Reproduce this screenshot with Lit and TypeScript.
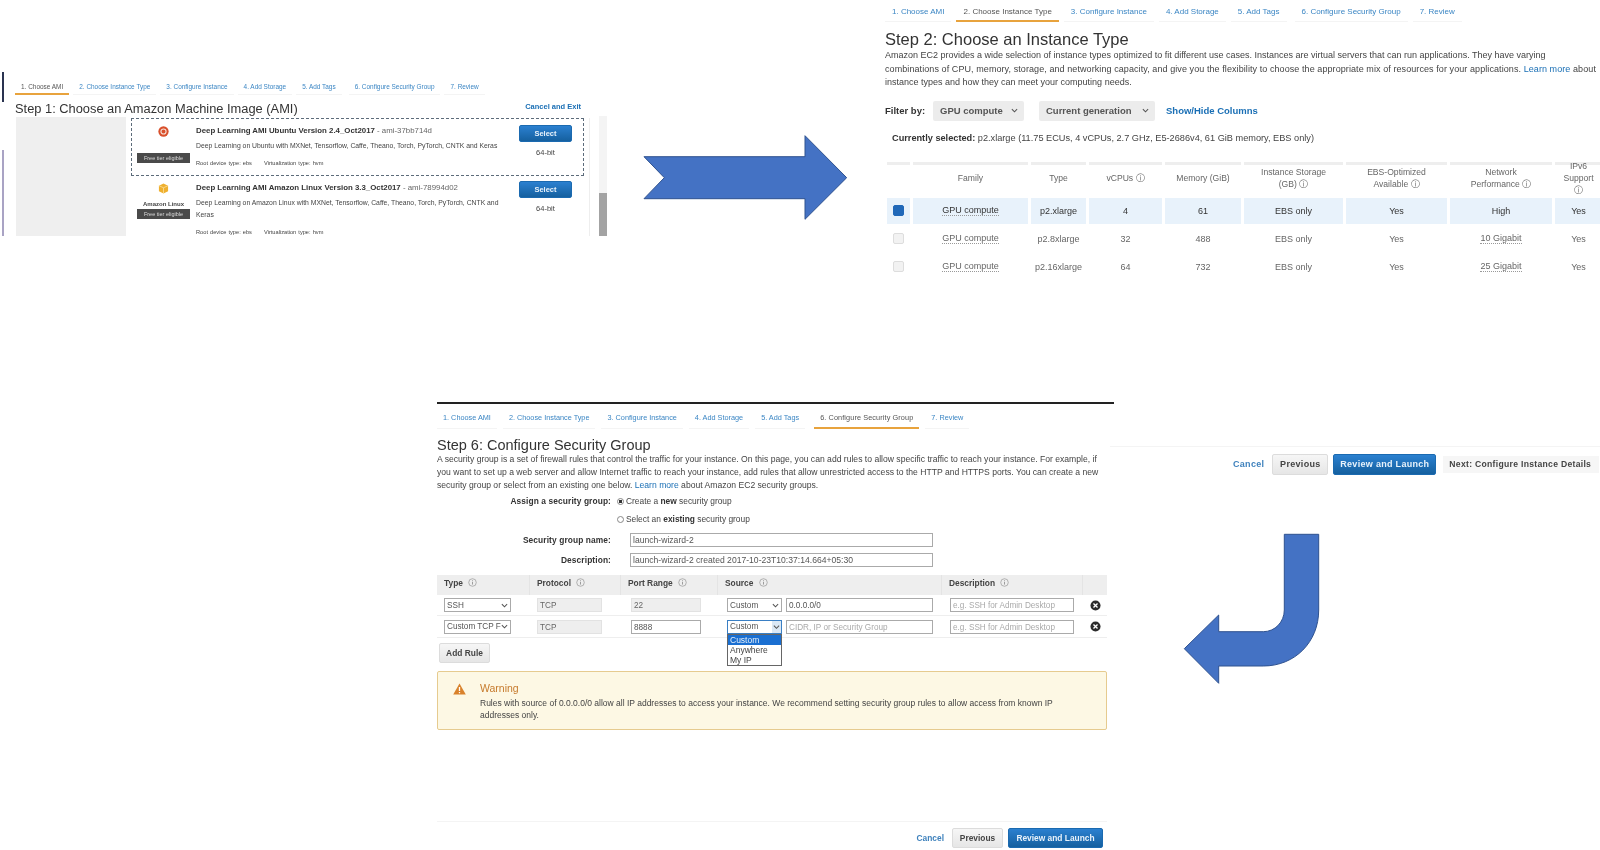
import { LitElement, html, css, svg } from "lit";
import { customElement } from "lit/decorators.js";

// --- Data ---

const STEPS = [
  "1. Choose AMI",
  "2. Choose Instance Type",
  "3. Configure Instance",
  "4. Add Storage",
  "5. Add Tags",
  "6. Configure Security Group",
  "7. Review",
];

const INSTANCE_HEAD = [
  "",
  "Family",
  "Type",
  "vCPUs ⓘ",
  "Memory (GiB)",
  "Instance Storage\n(GB) ⓘ",
  "EBS-Optimized\nAvailable ⓘ",
  "Network\nPerformance ⓘ",
  "IPv6\nSupport\nⓘ",
];

const INSTANCES = [
  { type: "p2.xlarge", cpu: "4", mem: "61", net: "High", on: true },
  { type: "p2.8xlarge", cpu: "32", mem: "488", net: "10 Gigabit", on: false },
  { type: "p2.16xlarge", cpu: "64", mem: "732", net: "25 Gigabit", on: false },
];

// --- Small pieces ---

const chevron = html`<svg class="chev" viewBox="0 0 8 5"><path d="M1 1l3 3 3-3" fill="none" stroke="#555" stroke-width="1.2" /></svg>`;

const info = html`<svg class="info" viewBox="0 0 10 10">
  <circle cx="5" cy="5" r="4.2" fill="none" stroke="#999" stroke-width=".8" />
  <path d="M5 4.3v3M5 2.6v.9" stroke="#888" stroke-width=".9" />
</svg>`;

const removeIcon = html`<svg class="remove" viewBox="0 0 12 12">
  <circle cx="6" cy="6" r="5.5" fill="#2b2b2b" />
  <path d="M3.8 3.8l4.4 4.4M8.2 3.8l-4.4 4.4" stroke="#fff" stroke-width="1.5" />
</svg>`;

const ubuntuIcon = html`<svg class="logo" viewBox="0 0 12 12">
  <circle cx="6" cy="6" r="5.6" fill="#d9502c" />
  <circle cx="6" cy="6" r="2.8" fill="none" stroke="#f6e3da" stroke-width="1.2" />
</svg>`;

const amazonIcon = html`<svg class="logo" viewBox="0 0 12 12">
  <path d="M6 .5l5 2.4v6.2l-5 2.4-5-2.4V2.9z" fill="#efb02f" />
  <path d="M6 5.2v6.3M1 2.9l5 2.3 5-2.3" fill="none" stroke="#fbe3a8" stroke-width=".8" />
</svg>`;

const warnIcon = html`<svg class="warn-icon" viewBox="0 0 12 11">
  <path d="M6 .4l5.8 10.2H.2z" fill="#d9822b" />
  <path d="M6 3.6v3.8M6 8.2v1.2" stroke="#fff" stroke-width="1.2" />
</svg>`;

const tabs = (active: number) => html`<div class="tabs">
  ${STEPS.map((s, i) => html`<span class="tab ${i === active ? "on" : ""}">${s}</span>`)}
</div>`;

const sel = (label: string, cls = "") => html`<div class="sel ${cls}"><span>${label}</span>${chevron}</div>`;

@customElement("app-root")
export class AppRoot extends LitElement {
  static styles = css`
    :host {
      display: block;
      position: relative;
      width: 1600px;
      height: 850px;
      overflow: hidden;
      background: #fff;
      font-family: "Liberation Sans", Arial, sans-serif;
      color: #444;
    }

    /* each screenshot sits on the slide like a window */
    .shot {
      position: absolute;
      overflow: hidden;
      background: #fff;
      filter: blur(0.45px);
      box-sizing: border-box;
    }
    .arrows {
      position: absolute;
      left: 0;
      top: 0;
    }

    a,
    .link {
      color: #1a6fb5;
    }
    b {
      color: #333;
    }

    .tabs {
      display: flex;
    }
    .tab {
      color: #3b86c4;
      white-space: nowrap;
      border-bottom: 1px solid #f4f4f4;
      box-sizing: border-box;
    }
    .tab.on {
      color: #555;
      border-bottom: 2px solid #e8a33d;
    }
    .tab:nth-child(6) {
      margin-left: 3px;
    }

    h1 {
      margin: 0;
      font-weight: 400;
      color: #333;
      white-space: nowrap;
    }
    p {
      margin: 0;
      white-space: nowrap;
    }

    .chev {
      width: 7px;
      height: 5px;
      flex: none;
    }
    .info {
      width: 9px;
      height: 9px;
      margin-left: 3px;
      vertical-align: -1px;
    }

    .btn {
      display: flex;
      align-items: center;
      justify-content: center;
      box-sizing: border-box;
      border-radius: 2px;
      font-weight: 700;
      white-space: nowrap;
    }
    .btn.blue {
      color: #e8f2fb;
      background: linear-gradient(#2b80d0, #15609f);
      border: 1px solid #1b6ab0;
    }
    .btn.grey {
      color: #444;
      background: linear-gradient(#f6f6f6, #e6e6e6);
      border: 1px solid #dcdcdc;
    }

    /* step 1 */
    .s1 {
      left: 0;
      top: 70px;
      width: 620px;
      height: 166px;
      padding: 8px 0 0 15px;
    }
    .edge {
      position: absolute;
      left: 2px;
      width: 2px;
    }
    .edge.dark {
      top: 2px;
      height: 30px;
      background: #2a3350;
    }
    .edge.mauve {
      top: 80px;
      height: 86px;
      background: #a9a3c4;
    }
    .s1 .tab {
      font-size: 6.45px;
      height: 17px;
      padding: 5px 6px 0;
      margin-right: 4px;
    }
    .s1 .head {
      display: flex;
      justify-content: space-between;
      width: 566px;
      margin-top: 6px;
      height: 15px;
    }
    .s1 h1 {
      font-size: 12.85px;
      line-height: 16px;
    }
    .s1 .exit {
      font-size: 7.5px;
      font-weight: 700;
      line-height: 9px;
      margin-top: 1px;
    }
    .s1 .body {
      display: flex;
      margin-left: 1px;
      height: 120px;
    }
    .s1 .side {
      width: 110px;
      margin-top: 1px;
      background: #efefef;
    }
    .s1 .list {
      width: 458px;
      margin: 2px 0 0 5px;
      border-right: 1px solid #eee;
      flex: none;
    }
    .ami {
      display: grid;
      grid-template-columns: 53px 317px 53px;
      column-gap: 6px;
      width: 453px;
      padding-left: 6px;
      box-sizing: border-box;
    }
    .ami.picked {
      height: 58px;
      border: 1px dashed #5c6b7a;
      padding-left: 5px;
    }
    .ami .mark {
      display: flex;
      flex-direction: column;
      align-items: center;
      padding-top: 7px;
      font-size: 6px;
      font-weight: 700;
    }
    .logo {
      width: 11px;
      height: 11px;
      flex: none;
    }
    .badge {
      width: 100%;
      height: 10px;
      background: #4a4a4a;
      color: #ddd;
      font-size: 5.5px;
      line-height: 10px;
      font-weight: 400;
      text-align: center;
    }
    .picked .badge {
      margin-top: 16px;
    }
    .distro {
      margin-top: 5px;
      height: 10px;
      line-height: 10px;
      white-space: nowrap;
      color: #444;
    }
    .ami .txt {
      padding-top: 7px;
      font-size: 6.82px;
      line-height: 12px;
      white-space: nowrap;
    }
    .ami .name {
      font-size: 7.85px;
      line-height: 10px;
      color: #666;
    }
    .ami .desc {
      margin-top: 4px;
      line-height: 12px;
    }
    .ami .root {
      margin-top: 7px;
      font-size: 5.67px;
      line-height: 8px;
      word-spacing: 0.5px;
    }
    .root span {
      margin-left: 10px;
    }
    .ami .side-r {
      display: flex;
      flex-direction: column;
      align-items: center;
      padding-top: 6px;
      font-size: 7.5px;
    }
    .ami + .ami .side-r {
      padding-top: 5px;
    }
    .side-r .btn {
      width: 53px;
      height: 17px;
      font-size: 7.5px;
      margin-bottom: 6px;
    }
    .scroll {
      width: 8px;
      margin: 0 0 0 9px;
      height: 120px;
      background: linear-gradient(#f4f4f4 0 77px, #a3a3a3 77px);
      flex: none;
    }

    /* step 2 */
    .s2 {
      left: 880px;
      top: 0;
      width: 720px;
      height: 285px;
      padding: 2px 0 0 5px;
    }
    .s2 .tab {
      font-size: 8px;
      height: 20px;
      padding: 5px 7px 0;
      margin-right: 5px;
    }
    .s2 h1 {
      font-size: 16.5px;
      line-height: 20px;
      margin-top: 7px;
    }
    .s2 p {
      font-size: 9px;
      line-height: 13.5px;
    }
    .s2 p .wide {
      letter-spacing: 0.08px;
    }
    .filter {
      display: flex;
      align-items: center;
      margin-top: 11px;
      height: 20px;
      font-size: 9.5px;
      font-weight: 700;
    }
    .filter .sel2 {
      display: flex;
      align-items: center;
      justify-content: space-between;
      box-sizing: border-box;
      height: 20px;
      padding: 0 6px 0 7px;
      background: #ececec;
      border-radius: 2px;
      color: #555;
    }
    .filter label {
      width: 48px;
      color: #333;
    }
    .filter .gen {
      width: 116px;
      margin: 0 11px 0 15px;
    }
    .filter .fam {
      width: 91px;
    }
    .current {
      margin: 11px 0 0 7px;
      font-size: 9.2px;
      line-height: 12px;
      white-space: nowrap;
    }
    .grid {
      display: grid;
      grid-template-columns: 23px 115px 55px 73px 76px 99px 101px 102px 47px;
      grid-template-rows: 34px repeat(3, 26px);
      gap: 2px 3px;
      margin: 18px 0 0 2px;
      font-size: 9px;
      color: #555;
      text-align: center;
    }
    .grid .th {
      border-top: 3px solid #eeeeee;
      display: flex;
      align-items: center;
      justify-content: center;
      font-size: 8.6px;
      line-height: 12px;
      color: #666;
      box-sizing: border-box;
      white-space: pre-line;
      padding-bottom: 5px;
    }
    .td {
      display: flex;
      align-items: center;
      justify-content: center;
      color: #666;
    }
    .td.on {
      background: #e8f2fb;
      color: #333;
    }
    .td span {
      border-bottom: 1px dotted #999;
    }
    .check {
      width: 11px;
      height: 11px;
      box-sizing: border-box;
      border-radius: 2px;
      background: #f2f2f2;
      border: 1px solid #ddd;
    }
    .check.on {
      background: #2068b8;
      border-color: #2068b8;
    }

    /* step 6 */
    .s6 {
      left: 437px;
      top: 402px;
      width: 677px;
      height: 448px;
      border-top: 2px solid #222;
    }
    .s6 .tab {
      font-size: 7.3px;
      height: 25px;
      padding: 9px 6px 0;
      margin-right: 6px;
    }
    .s6 .tab.on {
      letter-spacing: 0.1px;
    }
    .s6 h1 {
      font-size: 14.5px;
      line-height: 16px;
      margin-top: 8px;
    }
    .s6 p {
      font-size: 8.6px;
      line-height: 13px;
    }
    .form {
      display: grid;
      grid-template-columns: 174px 1fr;
      column-gap: 6px;
      font-size: 8.4px;
    }
    .form label {
      text-align: right;
      font-weight: 700;
      color: #333;
      display: flex;
      align-items: center;
      justify-content: flex-end;
      letter-spacing: 0.1px;
    }
    .radio {
      display: flex;
      align-items: center;
      height: 18px;
    }
    .radio i {
      width: 7px;
      height: 7px;
      box-sizing: border-box;
      border-radius: 50%;
      border: 1px solid #888;
      margin-right: 2px;
    }
    .radio i.on {
      background: radial-gradient(#333 45%, #fff 55%);
    }
    .field {
      box-sizing: border-box;
      border: 1px solid #aaa;
      height: 14px;
      line-height: 13px;
      padding-left: 2px;
      font-size: 8.2px;
      color: #555;
      white-space: nowrap;
      overflow: hidden;
      background: #fff;
    }
    .form .field {
      width: 303px;
      margin-left: 13px;
      font-size: 8.6px;
    }
    .form .gap-a {
      margin-top: 5px;
    }
    .form .gap-b {
      margin-top: 6px;
    }
    .rules-head {
      display: grid;
      grid-template-columns: 93px 91px 97px 224px 141px 24px;
      height: 20px;
      margin-top: 8px;
      width: 670px;
      background: #eeeeee;
      font-size: 8.4px;
      font-weight: 700;
      line-height: 17px;
      color: #444;
    }
    .rules-head div {
      padding-left: 7px;
      border-right: 1px solid #e4e4e4;
      box-sizing: border-box;
    }
    .rules-head div:last-child {
      border-right: 0;
    }
    .rule {
      display: grid;
      grid-template-columns: 93px 94px 96px 59px 164px 139px 18px;
      align-items: center;
      width: 670px;
      padding-left: 7px;
      box-sizing: border-box;
      height: 22px;
      border-bottom: 1px solid #eee;
    }
    .rule.first {
      height: 21px;
    }
    .sel {
      display: flex;
      align-items: center;
      justify-content: space-between;
      box-sizing: border-box;
      height: 14px;
      padding: 0 2px;
      border: 1px solid #aaa;
      font-size: 8.2px;
      color: #555;
      white-space: nowrap;
      overflow: hidden;
      background: #fff;
    }
    .type {
      width: 67px;
    }
    .source {
      width: 55px;
    }
    .field.ro {
      background: #eee;
      border-color: #e2e2e2;
      color: #666;
    }
    .field.hint {
      color: #aaa;
    }
    .w65 {
      width: 65px;
    }
    .w70 {
      width: 70px;
    }
    .w147 {
      width: 147px;
    }
    .w124 {
      width: 124px;
    }
    .remove {
      width: 11px;
      height: 11px;
      margin-left: 1px;
    }
    .src {
      position: relative;
    }
    .src .sel {
      border-color: #3a7fc4;
      padding-right: 0;
    }
    .src .chev {
      background: #dbe8f5;
      height: 12px;
      width: 9px;
      padding: 3px 1px;
      box-sizing: border-box;
    }
    .menu {
      position: absolute;
      left: 0;
      top: 14px;
      width: 55px;
      box-sizing: border-box;
      border: 1px solid #666;
      background: #fff;
      font-size: 8.5px;
      line-height: 10px;
      color: #444;
      z-index: 2;
    }
    .menu div {
      padding-left: 2px;
    }
    .menu .hi {
      background: #1a6fd1;
      color: #e6f0fa;
    }
    .add {
      width: 51px;
      height: 20px;
      margin: 5px 0 0 2px;
      font-size: 8.4px;
    }
    .warning {
      display: flex;
      box-sizing: border-box;
      width: 670px;
      height: 59px;
      margin-top: 8px;
      padding: 10px 0 0 15px;
      background: #fdf8e4;
      border: 1px solid #e6cb8f;
      border-radius: 2px;
    }
    .warn-icon {
      width: 13px;
      height: 12px;
      flex: none;
      margin: 1px 14px 0 0;
    }
    .warning h2 {
      margin: 0;
      font-size: 10.5px;
      font-weight: 400;
      line-height: 13px;
      color: #c67a2c;
    }
    .warning p {
      line-height: 12px;
      margin-top: 2px;
      font-size: 8.5px;
    }
    .foot {
      display: flex;
      align-items: center;
      justify-content: flex-end;
      box-sizing: border-box;
      border-top: 1px solid #f4f4f4;
      font-weight: 700;
    }
    .foot .cancel {
      color: #3f82bd;
    }
    .s6 .foot {
      width: 670px;
      height: 27px;
      margin-top: 91px;
      padding: 5px 4px 0 0;
      font-size: 8.4px;
    }
    .s6 .foot .cancel {
      margin-right: 8px;
    }
    .s6 .foot .grey {
      width: 51px;
      height: 20px;
      margin-right: 5px;
    }
    .s6 .foot .blue {
      width: 95px;
      height: 20px;
    }

    /* footer bar torn from the step 2 screen */
    .bar {
      left: 1110px;
      top: 446px;
      width: 490px;
      height: 30px;
      display: block;
    }
    .bar .foot {
      height: 30px;
      padding: 7px 0 2px 0;
      font-size: 9px;
      justify-content: flex-start;
    }
    .bar .cancel {
      margin-left: 123px;
      margin-right: 8px;
      letter-spacing: 0.3px;
    }
    .bar .grey {
      width: 56px;
      height: 21px;
      margin-right: 5px;
      letter-spacing: 0.3px;
    }
    .bar .blue {
      width: 103px;
      height: 21px;
      margin-right: 7px;
      letter-spacing: 0.3px;
    }
    .bar .next {
      width: 156px;
      height: 17px;
      line-height: 17px;
      padding-left: 6px;
      box-sizing: border-box;
      background: #f6f6f6;
      font-size: 8.6px;
      letter-spacing: 0.3px;
      color: #444;
      white-space: nowrap;
    }
  `;

  private renderStep1() {
    return html`<section class="shot s1">
      <div class="edge dark"></div>
      <div class="edge mauve"></div>
      ${tabs(0)}
      <div class="head">
        <h1>Step 1: Choose an Amazon Machine Image (AMI)</h1>
        <span class="exit link">Cancel and Exit</span>
      </div>
      <div class="body">
        <div class="side"></div>
        <div class="list">
          <div class="ami picked">
            <div class="mark">${ubuntuIcon}<div class="badge">Free tier eligible</div></div>
            <div class="txt">
              <div class="name"><b>Deep Learning AMI Ubuntu Version 2.4_Oct2017</b> - ami-37bb714d</div>
              <div class="desc">Deep Learning on Ubuntu with MXNet, Tensorflow, Caffe, Theano, Torch, PyTorch, CNTK and Keras</div>
              <div class="root">Root device type: ebs <span>Virtualization type: hvm</span></div>
            </div>
            <div class="side-r"><div class="btn blue">Select</div>64-bit</div>
          </div>
          <div class="ami">
            <div class="mark">${amazonIcon}<div class="distro">Amazon Linux</div><div class="badge">Free tier eligible</div></div>
            <div class="txt">
              <div class="name"><b>Deep Learning AMI Amazon Linux Version 3.3_Oct2017</b> - ami-78994d02</div>
              <div class="desc">Deep Learning on Amazon Linux with MXNet, Tensorflow, Caffe, Theano, Torch, PyTorch, CNTK and<br />Keras</div>
              <div class="root">Root device type: ebs <span>Virtualization type: hvm</span></div>
            </div>
            <div class="side-r"><div class="btn blue">Select</div>64-bit</div>
          </div>
        </div>
        <div class="scroll"></div>
      </div>
    </section>`;
  }

  private renderStep2() {
    return html`<section class="shot s2">
      ${tabs(1)}
      <h1>Step 2: Choose an Instance Type</h1>
      <p>
        Amazon EC2 provides a wide selection of instance types optimized to fit different use cases. Instances are virtual servers that can run applications. They have varying<br />
        <span class="wide">combinations of CPU, memory, storage, and networking capacity, and give you the flexibility to choose the appropriate mix of resources for your applications. <a>Learn more</a> about</span><br />
        instance types and how they can meet your computing needs.
      </p>
      <div class="filter">
        <label>Filter by:</label>
        <div class="sel2 fam">GPU compute ${chevron}</div>
        <div class="sel2 gen">Current generation ${chevron}</div>
        <span class="link">Show/Hide Columns</span>
      </div>
      <div class="current"><b>Currently selected:</b> p2.xlarge (11.75 ECUs, 4 vCPUs, 2.7 GHz, E5-2686v4, 61 GiB memory, EBS only)</div>
      <div class="grid">
        ${INSTANCE_HEAD.map((h) => html`<div class="th">${h}</div>`)}
        ${INSTANCES.map(
          (r) => html`
            <div class="td ${r.on ? "on" : ""}"><div class="check ${r.on ? "on" : ""}"></div></div>
            <div class="td ${r.on ? "on" : ""}"><span>GPU compute</span></div>
            <div class="td ${r.on ? "on" : ""}">${r.type}</div>
            <div class="td ${r.on ? "on" : ""}">${r.cpu}</div>
            <div class="td ${r.on ? "on" : ""}">${r.mem}</div>
            <div class="td ${r.on ? "on" : ""}">EBS only</div>
            <div class="td ${r.on ? "on" : ""}">Yes</div>
            <div class="td ${r.on ? "on" : ""}">${r.on ? r.net : html`<span>${r.net}</span>`}</div>
            <div class="td ${r.on ? "on" : ""}">Yes</div>
          `,
        )}
      </div>
    </section>`;
  }

  private renderStep6() {
    return html`<section class="shot s6">
      ${tabs(5)}
      <h1>Step 6: Configure Security Group</h1>
      <p>
        A security group is a set of firewall rules that control the traffic for your instance. On this page, you can add rules to allow specific traffic to reach your instance. For example, if<br />
        you want to set up a web server and allow Internet traffic to reach your instance, add rules that allow unrestricted access to the HTTP and HTTPS ports. You can create a new<br />
        security group or select from an existing one below. <a>Learn more</a> about Amazon EC2 security groups.
      </p>
      <div class="form">
        <label>Assign a security group:</label>
        <div class="radio"><i class="on"></i>Create a&nbsp;<b>new</b>&nbsp;security group</div>
        <span></span>
        <div class="radio"><i></i>Select an&nbsp;<b>existing</b>&nbsp;security group</div>
        <label class="gap-a">Security group name:</label>
        <div class="field gap-a">launch-wizard-2</div>
        <label class="gap-b">Description:</label>
        <div class="field gap-b">launch-wizard-2 created 2017-10-23T10:37:14.664+05:30</div>
      </div>
      <div class="rules-head">
        <div>Type ${info}</div>
        <div>Protocol ${info}</div>
        <div>Port Range ${info}</div>
        <div>Source ${info}</div>
        <div>Description ${info}</div>
        <div></div>
      </div>
      <div class="rule first">
        ${sel("SSH", "type")}
        <div class="field ro w65">TCP</div>
        <div class="field ro w70">22</div>
        ${sel("Custom", "source")}
        <div class="field w147">0.0.0.0/0</div>
        <div class="field hint w124">e.g. SSH for Admin Desktop</div>
        ${removeIcon}
      </div>
      <div class="rule">
        ${sel("Custom TCP F", "type")}
        <div class="field ro w65">TCP</div>
        <div class="field w70">8888</div>
        <div class="src">
          ${sel("Custom", "source")}
          <div class="menu">
            <div class="hi">Custom</div>
            <div>Anywhere</div>
            <div>My IP</div>
          </div>
        </div>
        <div class="field hint w147">CIDR, IP or Security Group</div>
        <div class="field hint w124">e.g. SSH for Admin Desktop</div>
        ${removeIcon}
      </div>
      <div class="btn grey add">Add Rule</div>
      <div class="warning">
        ${warnIcon}
        <div>
          <h2>Warning</h2>
          <p>
            Rules with source of 0.0.0.0/0 allow all IP addresses to access your instance. We recommend setting security group rules to allow access from known IP<br />
            addresses only.
          </p>
        </div>
      </div>
      <div class="foot">
        <span class="cancel">Cancel</span>
        <div class="btn grey">Previous</div>
        <div class="btn blue">Review and Launch</div>
      </div>
    </section>`;
  }

  render() {
    return html`
      ${this.renderStep1()} ${this.renderStep2()} ${this.renderStep6()}
      <section class="shot bar">
        <div class="foot">
          <span class="cancel">Cancel</span>
          <div class="btn grey">Previous</div>
          <div class="btn blue">Review and Launch</div>
          <div class="next">Next: Configure Instance Details</div>
        </div>
      </section>
      <svg class="arrows" width="1600" height="850" viewBox="0 0 1600 850">
        ${svg`
          <path d="M644 156.7H805V135.7L846.7 177.7L805 219.3V198.7H644L664.3 177.7Z" fill="#4472c4" stroke="#2f528f" />
          <path d="M1284.3 534.3H1318.7V610C1318.7 642 1295 666 1263.3 666H1218.7V683.3L1184.3 648.7L1218.7 615V631.7H1263.3C1275 631.7 1284.3 622 1284.3 610Z" fill="#4472c4" stroke="#2f528f" />
        `}
      </svg>
    `;
  }
}
